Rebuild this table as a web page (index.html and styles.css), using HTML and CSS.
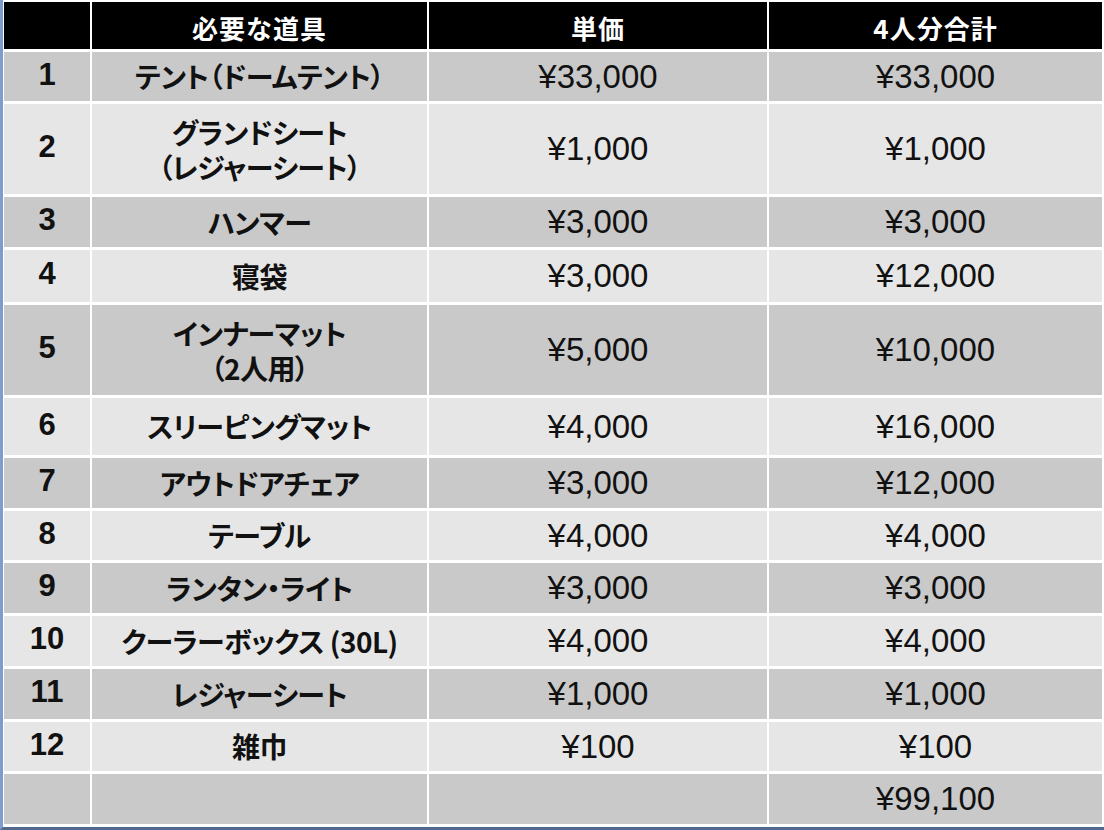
FILE: index.html
```html
<!DOCTYPE html>
<html lang="ja">
<head>
<meta charset="utf-8">
<title>キャンプ用品 費用表</title>
<link rel="stylesheet" href="styles.css">
</head>
<body>
<div class="page">
  <div class="sheet">
    <div class="cell head"></div>
    <div class="cell head">必要な道具</div>
    <div class="cell head">単価</div>
    <div class="cell head">4人分合計</div>

    <div class="cell dark no">1</div>
    <div class="cell dark name">テント（ドームテント）</div>
    <div class="cell dark price">¥33,000</div>
    <div class="cell dark price">¥33,000</div>

    <div class="cell light no">2</div>
    <div class="cell light name multi"><span class="line">グランドシート</span><span class="line">（レジャーシート）</span></div>
    <div class="cell light price">¥1,000</div>
    <div class="cell light price">¥1,000</div>

    <div class="cell dark no">3</div>
    <div class="cell dark name">ハンマー</div>
    <div class="cell dark price">¥3,000</div>
    <div class="cell dark price">¥3,000</div>

    <div class="cell light no">4</div>
    <div class="cell light name">寝袋</div>
    <div class="cell light price">¥3,000</div>
    <div class="cell light price">¥12,000</div>

    <div class="cell dark no">5</div>
    <div class="cell dark name multi"><span class="line">インナーマット</span><span class="line">（2人用）</span></div>
    <div class="cell dark price">¥5,000</div>
    <div class="cell dark price">¥10,000</div>

    <div class="cell light no">6</div>
    <div class="cell light name">スリーピングマット</div>
    <div class="cell light price">¥4,000</div>
    <div class="cell light price">¥16,000</div>

    <div class="cell dark no">7</div>
    <div class="cell dark name">アウトドアチェア</div>
    <div class="cell dark price">¥3,000</div>
    <div class="cell dark price">¥12,000</div>

    <div class="cell light no">8</div>
    <div class="cell light name">テーブル</div>
    <div class="cell light price">¥4,000</div>
    <div class="cell light price">¥4,000</div>

    <div class="cell dark no">9</div>
    <div class="cell dark name">ランタン・ライト</div>
    <div class="cell dark price">¥3,000</div>
    <div class="cell dark price">¥3,000</div>

    <div class="cell light no">10</div>
    <div class="cell light name">クーラーボックス (30L)</div>
    <div class="cell light price">¥4,000</div>
    <div class="cell light price">¥4,000</div>

    <div class="cell dark no">11</div>
    <div class="cell dark name">レジャーシート</div>
    <div class="cell dark price">¥1,000</div>
    <div class="cell dark price">¥1,000</div>

    <div class="cell light no">12</div>
    <div class="cell light name">雑巾</div>
    <div class="cell light price">¥100</div>
    <div class="cell light price">¥100</div>

    <div class="cell dark"></div>
    <div class="cell dark"></div>
    <div class="cell dark"></div>
    <div class="cell dark price">¥99,100</div>
  </div>
</div>
</body>
</html>
```

FILE: styles.css
```css
html, body {
  margin: 0;
  padding: 0;
  background: #ffffff;
}

.page {
  box-sizing: border-box;
  width: 1104px;
  height: 830px;
  padding: 2px 0 0 1px;
  border-left: 3px solid #7f9dcc;
  border-bottom: 3px solid #51698c;
  background: #ffffff;
  overflow: hidden;
}

.sheet {
  display: grid;
  grid-template-columns: 86px 335px 338px 333px;
  grid-template-rows: 47px 49px 90px 50px 52px 90px 57px 50px 49px 50px 50px 50px 49px 50px;
  column-gap: 2px;
  row-gap: 3px;
}

.cell {
  display: flex;
  align-items: center;
  justify-content: center;
  text-align: center;
  color: #111111;
  box-sizing: border-box;
}

.head {
  background: #000000;
  color: #ffffff;
  font-family: "Noto Sans CJK JP", sans-serif;
  font-weight: 700;
  font-size: 26px;
  letter-spacing: 1px;
  padding-top: 4px;
}

.dark {
  background: #c9c9c9;
}

.light {
  background: #e6e6e6;
}

.no {
  font-family: "Liberation Sans", Arial, sans-serif;
  font-weight: 700;
  font-size: 31px;
  padding-bottom: 4px;
}

.name {
  font-family: "Noto Sans CJK JP", sans-serif;
  font-weight: 700;
  font-size: 28px;
  letter-spacing: -0.5px;
  font-feature-settings: "palt";
  line-height: 35px;
}

.multi {
  flex-direction: column;
  gap: 1px;
}

.line {
  display: block;
  line-height: 34px;
}

.price {
  font-family: "Liberation Sans", Arial, sans-serif;
  font-size: 33px;
}
```
